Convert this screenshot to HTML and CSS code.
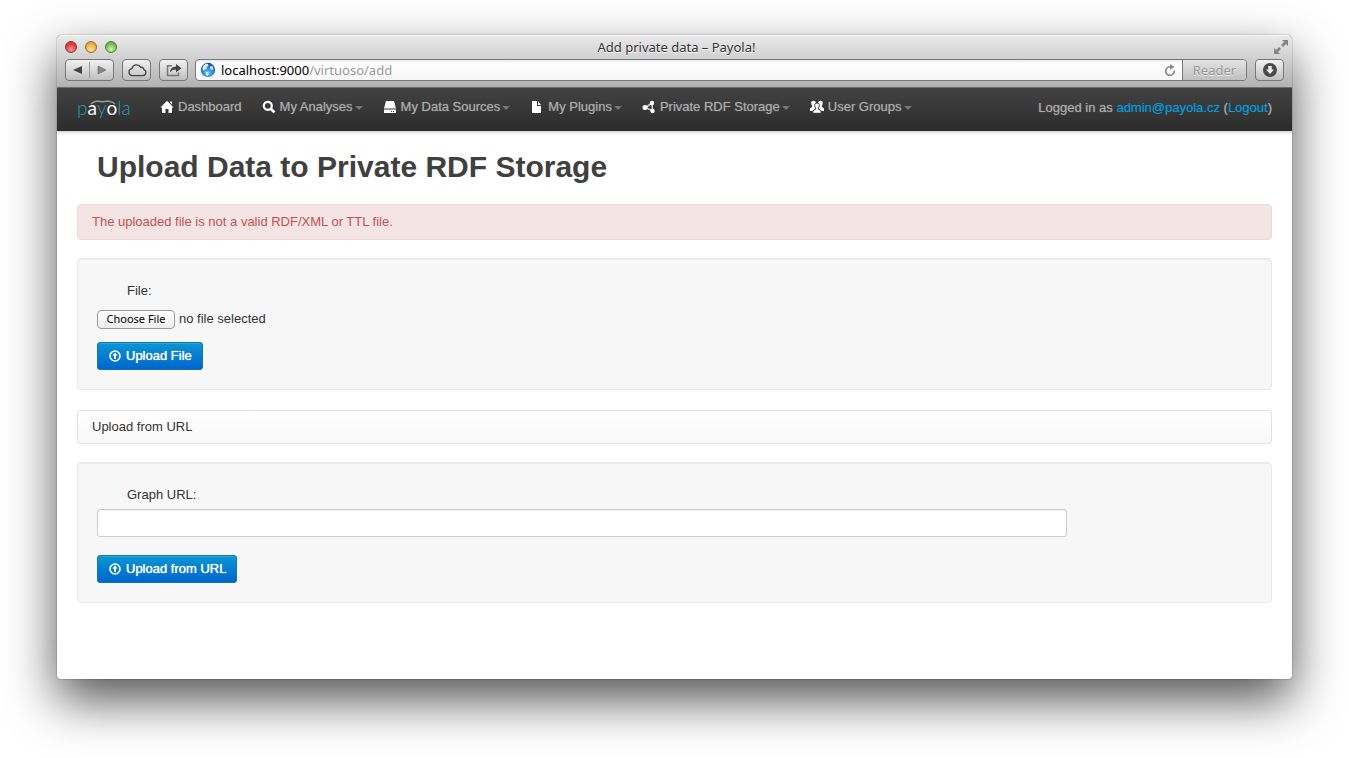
FILE: index.html
```html
<!DOCTYPE html>
<html lang="en">
<head>
<meta charset="utf-8">
<title>Add private data – Payola!</title>
<link rel="stylesheet" href="styles.css">
</head>
<body>
<div class="window">
  <header class="chrome">
    <div class="titlebar">
      <div class="lights">
        <button class="light light-red" type="button" aria-label="Close"></button>
        <button class="light light-amber" type="button" aria-label="Minimize"></button>
        <button class="light light-green" type="button" aria-label="Zoom"></button>
      </div>
      <div class="window-title">Add private data – Payola!</div>
      <button class="fullscreen" type="button" aria-label="Full screen">
        <svg width="14" height="14" viewBox="0 0 14 14" fill="#858585"><path d="M8 0h6v6l-2-2-3 3-2-2 3-3zM0 8l2 2 3-3 2 2-3 3 2 2H0z"/></svg>
      </button>
    </div>
    <div class="toolbar">
      <div class="tool-group">
        <button class="nav-arrow" type="button" aria-label="Back"><svg width="10" height="10" viewBox="0 0 10 10"><path d="M0 5l9-4v8z" fill="#444"/></svg></button>
        <button class="nav-arrow" type="button" aria-label="Forward"><svg width="10" height="10" viewBox="0 0 10 10"><path d="M9 5L1 1v8z" fill="#888" stroke="#666" stroke-width=".6"/></svg></button>
      </div>
      <button class="tool" type="button" aria-label="iCloud tabs"><svg width="20" height="14" viewBox="0 0 20 14" fill="none" stroke="#444" stroke-width="1.3"><path d="M4.800 12.600h11.200a3.100 3.100 0 0 0 .9-6A2.900 2.900 0 0 0 13.600 4.300 4.600 4.600 0 0 0 5 5.700 3.500 3.500 0 0 0 4.800 12.600z"/></svg></button>
      <button class="tool" type="button" aria-label="Share"><svg width="16" height="14" viewBox="0 0 16 14"><path d="M6 2.700H1.500v9.800h11V9.500" fill="none" stroke="#777" stroke-width="1.500"/><path d="M4 9.500c.3-4 2.500-5.700 6-5.700V1l5.500 4.300L10 9.300V6.600c-2.600 0-4.300.6-6 2.900z" fill="#444"/></svg></button>
      <div class="address">
        <svg class="globe" width="16" height="16" viewBox="0 0 16 16"><defs><radialGradient id="sea" cx=".5" cy=".7" r=".7"><stop offset="0" stop-color="#5bc0fa"/><stop offset=".6" stop-color="#2d7fd0"/><stop offset="1" stop-color="#1b3f8a"/></radialGradient></defs><circle cx="8" cy="8" r="7.200" fill="url(#sea)"/><path d="M3 4l3-2.500 2 .5.5 2-2 1 .5 1.500-2 1L4 9 2.500 7zM10.500 4l2 .5 1 2.500-1.500 1-2-1.500zM5.500 9.500l2.500.5 1 1.500L7.500 14 6 13z" fill="#d3ecfb"/></svg>
        <div class="url">localhost:9000<span class="path">/virtuoso/add</span></div>
        <button class="reload" type="button" aria-label="Reload"><svg width="12" height="12" viewBox="0 0 12 12"><path d="M10.200 6.500A4.300 4.300 0 1 1 6.500 2.800" fill="none" stroke="#8a8a8a" stroke-width="1.600"/><path d="M6 0l4.500 3L6 5.800z" fill="#8a8a8a"/></svg></button>
        <button class="reader" type="button">Reader</button>
      </div>
      <button class="tool" type="button" aria-label="Downloads"><svg width="14" height="14" viewBox="0 0 14 14"><circle cx="7" cy="7" r="7" fill="#4a4a4a"/><path d="M5.300 3h3.400v3.600h2.300L7 11 3 6.600h2.300z" fill="#eee"/></svg></button>
    </div>
  </header>

  <nav class="navbar">
    <a class="brand" href="#" aria-label="payola">
      <svg width="56" height="30" viewBox="0 0 56 30"><text class="logo-text" x="0" y="19"><tspan>p</tspan><tspan class="logo-white">a</tspan><tspan>y</tspan><tspan class="logo-white">o</tspan><tspan>la</tspan></text><path d="M14 8c3-3 5-2 6-3 4 1 7 1 11 0 1 1 4 0 7 3" fill="none" stroke="#999" stroke-width="1.500"/></svg>
    </a>
    <ul class="menu">
      <li><a href="#"><svg class="icon" viewBox="0 0 14 14"><path d="M7 .8L13.600 7.500H12V13H8.500V9h-3v4H2V7.500H.4zM10 1.500h2v3l-2-2z"/></svg>Dashboard</a></li>
      <li><a href="#"><svg class="icon" viewBox="0 0 14 14"><circle cx="5.800" cy="5.800" r="4" fill="none" stroke="#fff" stroke-width="2.200"/><path d="M8.500 8.500l4 4" stroke="#fff" stroke-width="2.600"/></svg>My Analyses<span class="caret"></span></a></li>
      <li><a href="#"><svg class="icon" viewBox="0 0 14 14"><path d="M3 1h8l2 7.500H1zM1 9.500h12V13H1zM8 11v1h1v-1zm2 0v1h1v-1z" fill-rule="evenodd"/></svg>My Data Sources<span class="caret"></span></a></li>
      <li><a href="#"><svg class="icon" viewBox="0 0 14 14"><path d="M2 1h5v5h4v7H2zM8 1l3 4H8z"/></svg>My Plugins<span class="caret"></span></a></li>
      <li><a href="#"><svg class="icon" viewBox="0 0 14 14"><path d="M10 3L3.500 7.500 10.500 11z" fill="none" stroke="#ccc" stroke-width="1.600"/><circle cx="10" cy="3" r="2.200"/><circle cx="3" cy="7.500" r="2.500"/><circle cx="10.500" cy="11" r="2.200"/></svg>Private RDF Storage<span class="caret"></span></a></li>
      <li><a href="#"><svg class="icon" viewBox="0 0 14 14"><path d="M3.500.8c3 0 2.600 3.200 1.300 5v1L7 8v3H0V8.500l2.200-1.700v-1C.9 4 .5.8 3.500.8zM10.500.8c-3 0-2.600 3.200-1.300 5v1L7 8v3h7V8.500l-2.200-1.700v-1C13.100 4 13.500.8 10.500.8z"/><path d="M7 3c3 0 2.700 3.400 1.400 5v1.200l2.800 1.600v2.500H2.800v-2.500l2.800-1.600V8C4.300 6.400 4 3 7 3z" stroke="#333" stroke-width="1"/></svg>User Groups<span class="caret"></span></a></li>
    </ul>
    <p class="session">Logged in as <a href="#">admin@payola.cz</a> (<a href="#">Logout</a>)</p>
  </nav>

  <main class="content">
    <h1>Upload Data to Private RDF Storage</h1>
    <div class="alert" role="alert">The uploaded file is not a valid RDF/XML or TTL file.</div>
    <form class="well">
      <label class="field-label" for="file">File:</label>
      <div class="file-row"><input class="file" id="file" type="file"><span>no file selected</span></div>
      <button class="btn" type="button"><svg class="btn-icon" viewBox="0 0 12 12"><circle cx="6" cy="6" r="5" fill="none" stroke="#fff" stroke-width="1.600"/><path d="M6 2.500l2.700 3H7V9H5V5.500H3.300z" fill="#fff"/></svg>Upload File</button>
    </form>
    <h2 class="section">Upload from URL</h2>
    <form class="well">
      <label class="field-label" for="url">Graph URL:</label>
      <input class="text" id="url" type="text">
      <button class="btn" type="button"><svg class="btn-icon" viewBox="0 0 12 12"><circle cx="6" cy="6" r="5" fill="none" stroke="#fff" stroke-width="1.600"/><path d="M6 2.500l2.700 3H7V9H5V5.500H3.300z" fill="#fff"/></svg>Upload from URL</button>
    </form>
  </main>
</div>
</body>
</html>
```
FILE: styles.css
```css
* { box-sizing: border-box; }
body {
  margin: 0;
  min-height: 100vh;
  padding: 35px 57px 79px;
  display: flex;
  background: #fff;
  color: #333;
  font: 13px/18px "Liberation Sans", Arial, sans-serif;
}
button { margin: 0; padding: 0; border: 0; background: none; font: inherit; }
a { color: #0d9ad6; text-decoration: none; }
svg { display: block; }

.window {
  flex: 1;
  display: flex;
  flex-direction: column;
  min-width: 0;
  overflow: hidden;
  border-radius: 5px 5px 3px 3px;
  background: #fff;
  box-shadow: 0 0 1px #000, 0 21px 50px rgba(0, 0, 0, .68);
}

/* Browser chrome */
.chrome {
  font-family: "Noto Sans", "Open Sans", sans-serif;
  background: linear-gradient(#e9e9e9, #b2b2b2);
  border-top: 1px solid #f4f4f4;
  border-bottom: 1px solid #747474;
}
.titlebar {
  display: grid;
  grid-template-columns: 1fr auto 1fr;
  align-items: center;
  height: 21px;
  padding: 0 4px 0 8px;
}
.lights { display: flex; gap: 8px; }
.light {
  width: 12px;
  height: 12px;
  border: 1px solid;
  border-radius: 50%;
}
.light-red { border-color: #8d3532; background: radial-gradient(circle at 50% 75%, #ff9b98, #e0383e 60%); }
.light-amber { border-color: #9a6a2a; background: radial-gradient(circle at 50% 75%, #ffe49a, #eca23c 70%); }
.light-green { border-color: #4a7a38; background: radial-gradient(circle at 50% 75%, #cdf5a6, #6cb551 70%); }
.window-title { color: #333; text-shadow: 0 1px 0 #fff; }
.fullscreen { justify-self: end; }

.toolbar {
  display: flex;
  align-items: center;
  height: 30px;
  padding: 0 8px 4px;
}
.tool, .tool-group {
  display: flex;
  align-items: center;
  justify-content: center;
  height: 22px;
  border: 1px solid #777;
  border-radius: 4px;
  background: linear-gradient(#f2f2f2, #bfbfbf);
}
.tool { width: 29px; margin-left: 8px; }
.tool-group { width: 49px; }
.nav-arrow { flex: 1; display: flex; justify-content: center; }
.nav-arrow + .nav-arrow { border-left: 1px solid #999; padding: 3px 0; }
.address {
  flex: 1;
  display: flex;
  align-items: center;
  height: 22px;
  margin-left: 7px;
  border: 1px solid #777;
  border-radius: 4px;
  background: linear-gradient(#ececec, #fff 4px, #f7f7f7);
}
.globe { margin: 0 5px 0 4px; }
.url { flex: 1; color: #000; }
.path { color: #999; }
.reader {
  align-self: stretch;
  width: 64px;
  margin-left: 6px;
  border-left: 1px solid #777;
  border-radius: 0 3px 3px 0;
  background: linear-gradient(#e4e4e4, #c0c0c0);
  color: #999;
  text-shadow: 0 1px 0 #eee;
}

/* Site navigation */
.navbar {
  display: flex;
  min-height: 43px;
  padding: 0 20px;
  background: linear-gradient(#424242, #2c2c2c);
  color: #999;
  box-shadow: 0 1px 3px rgba(0, 0, 0, .25);
}
.brand { padding-top: 8px; margin-right: 17px; }
.logo-text { font-family: Lato, sans-serif; font-weight: 300; font-size: 19px; fill: #2e9cb0; }
.logo-white { font-weight: 400; fill: #fff; }
.menu { display: flex; margin: 0; padding: 0; list-style: none; }
.menu a {
  display: flex;
  align-items: center;
  padding: 10px;
  color: #aaa;
  text-shadow: 0 0 1px #888;
}
.icon { width: 14px; height: 14px; margin-right: 4px; fill: #fff; }
.caret {
  margin: 1px 0 0 2px;
  border: 4px solid transparent;
  border-top-color: #777;
  border-bottom: 0;
}
.session { margin: 11px 0 0 auto; color: #aaa; text-shadow: 0 0 1px #888; }
.session a { text-shadow: 0 0 1px #0d709a; }

/* Page */
.content { padding: 18px 20px 20px; }
h1 { margin: 0 0 19px; padding-left: 20px; color: #404040; font-size: 30px; line-height: 36px; }
.alert {
  margin-bottom: 18px;
  padding: 8px 14px;
  border: 1px solid #f0d8da;
  border-radius: 4px;
  background: #f5e4e4;
  color: #c4514f;
}
.well {
  padding: 19px;
  border: 1px solid #e9e9e9;
  border-radius: 4px;
  background: #f7f7f7;
  box-shadow: inset 0 1px 1px rgba(0, 0, 0, .05);
}
.field-label { display: block; margin: 4px 0 5px 30px; }
.file-row { display: flex; align-items: center; gap: 4px; height: 28px; margin-bottom: 9px; }
.file { width: 78px; height: 19px; overflow: hidden; }
.file::file-selector-button {
  width: 78px;
  height: 19px;
  margin: 0;
  padding: 0;
  border: 1px solid #999;
  border-radius: 4px;
  background: linear-gradient(#fff, #ededed);
  color: #000;
  font: 11px/16px "Noto Sans", "Open Sans", sans-serif;
}
.btn {
  display: flex;
  align-items: center;
  height: 28px;
  padding: 0 11px 0 12px;
  border-radius: 4px;
  background: linear-gradient(#0a98d2, #0064cd);
  box-shadow: inset 0 0 0 1px #0a76b4, inset 0 2px 0 rgba(255, 255, 255, .15);
  color: #fff;
  text-shadow: 0 0 1px #fff;
}
.btn-icon { width: 12px; height: 12px; margin-right: 5px; }
.section {
  margin: 20px 0 18px;
  padding: 7px 14px;
  border: 1px solid #e2e2e2;
  border-radius: 3px;
  background: linear-gradient(#fff, #f8f8f8);
  font-size: 13px;
  font-weight: 400;
  line-height: 18px;
}
.text {
  display: block;
  width: 84%;
  height: 28px;
  margin: 0 0 18px;
  padding: 4px;
  border: 1px solid #ccc;
  border-radius: 3px;
  background: #fff;
  box-shadow: inset 0 1px 1px rgba(0, 0, 0, .07);
  font: inherit;
}
```
